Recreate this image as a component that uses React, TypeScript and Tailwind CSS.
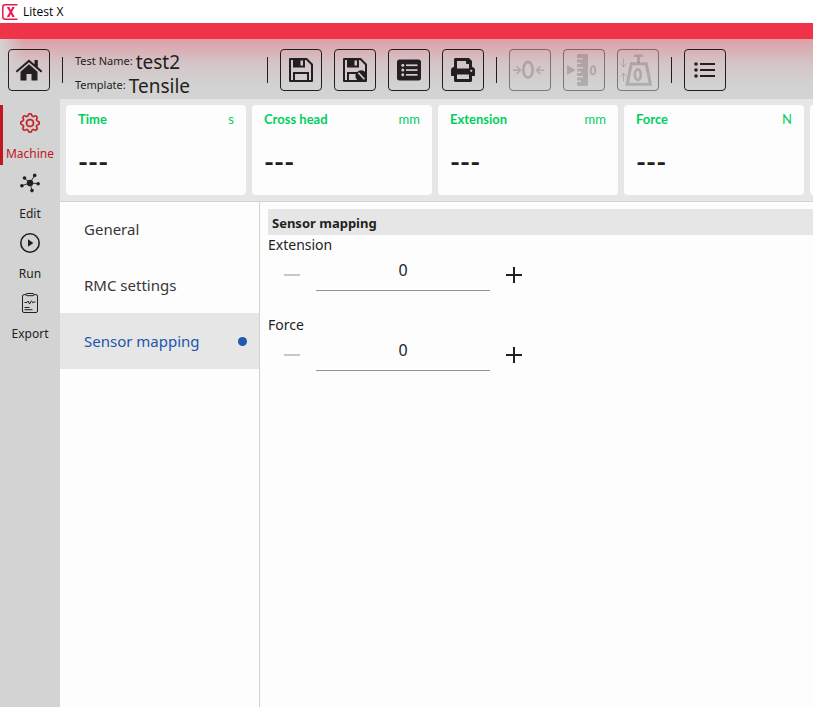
import React, { useState } from "react";
import { FaPrint } from "react-icons/fa";
import { BsGear } from "react-icons/bs";

const ui = "font-['Noto_Sans',sans-serif]";

function Divider() {
  return <div className="h-[26px] w-px shrink-0 bg-[#231f20]" />;
}

function ToolButton({
  label,
  disabled,
  children,
}: {
  label: string;
  disabled?: boolean;
  children: React.ReactNode;
}) {
  return (
    <button
      type="button"
      aria-label={label}
      disabled={disabled}
      className="flex size-[42px] shrink-0 items-center justify-center rounded border border-[#231f20] text-[#231f20] disabled:border-[#231f20]/50 disabled:text-[#231f20]/20"
    >
      {children}
    </button>
  );
}

function HomeIcon() {
  return (
    <svg width="28" height="24" viewBox="0 0 28 24" fill="currentColor">
      <path d="M14 1.500L19.500 6.200V2H22.800V9L27.300 13L26 14.500L14 4.300L2 14.500L0.700 13Z" />
      <path d="M14 6.300L22.500 13.800V22.500H16.500V16H11.500V22.500H5.500V13.800Z" />
    </svg>
  );
}

function SaveShape() {
  return (
    <>
      <path d="M1 1H17.5L23 6.5V23H1Z" fill="none" stroke="currentColor" strokeWidth="2" strokeLinejoin="round" />
      <path fillRule="evenodd" d="M4 1H16V9.5H4ZM11.5 2.5V7.5H14V2.5Z" fill="currentColor" />
      <path d="M5 23V15H19V23" fill="none" stroke="currentColor" strokeWidth="2" />
    </>
  );
}

function SaveIcon() {
  return (
    <svg width="24" height="24" viewBox="0 0 24 24">
      <SaveShape />
    </svg>
  );
}

function SaveAsIcon() {
  return (
    <svg width="24" height="24" viewBox="0 0 24 24">
      <SaveShape />
      <circle cx="18.2" cy="18" r="5.8" fill="currentColor" />
      <path d="M15.4 14.8L21.4 21.2" stroke="#d5cfd0" strokeWidth="1.6" />
    </svg>
  );
}

function ReportIcon() {
  return (
    <svg width="24" height="24" viewBox="0 0 24 24">
      <rect x="0" y="1.5" width="24" height="21" rx="2.5" fill="currentColor" />
      <g fill="#d5c9cb">
        <circle cx="5.8" cy="7.2" r="1.5" />
        <circle cx="5.8" cy="12" r="1.5" />
        <circle cx="5.8" cy="16.8" r="1.5" />
        <rect x="9" y="6.4" width="11.5" height="1.7" />
        <rect x="9" y="11.2" width="11.5" height="1.7" />
        <rect x="9" y="16" width="11.5" height="1.7" />
      </g>
    </svg>
  );
}

function ZeroIcon() {
  return (
    <svg width="40" height="40" viewBox="0 0 40 40" fill="none" stroke="currentColor" strokeWidth="1.4">
      <path d="M3 20.2H10.5M6.5 16.2L10.5 20.2L6.5 24.2M34 20.2H26.5M30.5 16.2L26.5 20.2L30.5 24.2" />
      <ellipse cx="18" cy="19.8" rx="4.7" ry="7.9" strokeWidth="2.6" />
    </svg>
  );
}

function RulerIcon() {
  return (
    <svg width="40" height="40" viewBox="0 0 40 40" fill="currentColor">
      <path d="M3 15V25L11.5 20Z" />
      <path d="M14.500 4H22.500Q24 4 24 5.500V34.500Q24 36 22.500 36H14.500Q13 36 13 34.500V32H17V30.500H13V27.500H19V26H13V23H17V21.500H13V18.500H19V17H13V14H17V12.500H13V9.500H19V8H13V5.500Q13 4 14.500 4Z" />
      <ellipse cx="29" cy="20.200" rx="2.300" ry="4" fill="none" stroke="currentColor" strokeWidth="1.900" />
    </svg>
  );
}

function WeightIcon() {
  return (
    <svg width="40" height="40" viewBox="0 0 40 40" fill="none" stroke="currentColor">
      <path d="M16 4.500H25V7H22V13H19V7H16Z" fill="currentColor" stroke="none" />
      <path d="M13.300 13.700H28.300L32.400 34.300H9.200Z" strokeWidth="3" />
      <ellipse cx="19.800" cy="24.600" rx="3" ry="5.200" strokeWidth="2.700" />
      <path d="M5.500 8.500V16.500M2.500 13.500L5.500 16.800L8.500 13.500M5.500 31.500V23.500M2.500 26.500L5.500 23.200L8.500 26.500" strokeWidth="1" />
    </svg>
  );
}

function ListIcon() {
  return (
    <svg width="22" height="16" viewBox="0 0 22 16" fill="currentColor">
      <circle cx="2" cy="2" r="1.8" />
      <circle cx="2" cy="8" r="1.8" />
      <circle cx="2" cy="14" r="1.8" />
      <rect x="6" y="1" width="15" height="2" />
      <rect x="6" y="7" width="15" height="2" />
      <rect x="6" y="13" width="15" height="2" />
    </svg>
  );
}

function HubIcon() {
  return (
    <svg width="20" height="20" viewBox="0 0 20 20" fill="currentColor" stroke="currentColor">
      <path d="M10 10L4.300 5M10 10L14.700 2.300M10 10L18.300 10.700M10 10L12 17.700M10 10L1.700 12.700" strokeWidth="0.900" />
      <g stroke="none">
        <circle cx="10" cy="10" r="3.200" />
        <circle cx="4.500" cy="5" r="1.800" />
        <circle cx="14.700" cy="2.400" r="1.800" />
        <circle cx="18.100" cy="10.700" r="1.800" />
        <circle cx="12" cy="17.600" r="1.800" />
        <circle cx="1.900" cy="12.700" r="1.800" />
      </g>
    </svg>
  );
}

function RunIcon() {
  return (
    <svg width="20" height="20" viewBox="0 0 20 20">
      <circle cx="10" cy="10" r="9.200" fill="none" stroke="currentColor" strokeWidth="1.600" />
      <path d="M8 6.200V13.800L13.400 10Z" fill="currentColor" />
    </svg>
  );
}

function ExportIcon() {
  return (
    <svg width="20" height="20" viewBox="0 0 20 20" fill="none" stroke="currentColor">
      <rect x="2.500" y="1.600" width="15" height="17.900" rx="1.500" />
      <rect x="6" y="0.500" width="8" height="2.200" rx="1" fill="#d3d3d3" />
      <path d="M4.500 9.500H7L8.200 8L9.500 11L11.500 7.800L12.800 9.800L13.800 9H15.500" />
      <path d="M4.500 14.500H9.500M4.500 16.700H12.500" />
    </svg>
  );
}

function LogoIcon() {
  return (
    <svg width="16" height="16" viewBox="0 0 16 16" fill="none" stroke="#f0144d">
      <path d="M15.500 0.800H3.200Q0.800 0.800 0.800 3.200V12.800Q0.800 15.200 3.200 15.200H15.500" strokeWidth="1.500" />
      <path d="M6.300 3.500L11.300 12.500M11.300 3.500L6.300 12.500" strokeWidth="2" />
      <path d="M5 3.700H7.600M10 3.700H12.600M5 12.300H7.600M10 12.300H12.600" strokeWidth="1" />
    </svg>
  );
}

const steps = [
  { name: "Machine", icon: <BsGear size={20} strokeWidth={0.3} /> },
  { name: "Edit", icon: <HubIcon /> },
  { name: "Run", icon: <RunIcon /> },
  { name: "Export", icon: <ExportIcon /> },
];

const details = [
  { term: "Test Name:", value: "test2" },
  { term: "Template:", value: "Tensile" },
];

const readouts = [
  { name: "Time", unit: "s", value: "---" },
  { name: "Cross head", unit: "mm", value: "---" },
  { name: "Extension", unit: "mm", value: "---" },
  { name: "Force", unit: "N", value: "---" },
  { name: "", unit: "", value: "" },
];

const pages = ["General", "RMC settings", "Sensor mapping"];

function Stepper({ label }: { label: string }) {
  const [value, setValue] = useState(0);
  const id = `mapping-${label.toLowerCase()}`;
  return (
    <div>
      <label htmlFor={id} className="block h-5 text-sm leading-5">
        {label}
      </label>
      <div className="flex">
        <button
          type="button"
          aria-label={`Decrease ${label}`}
          disabled={value === 0}
          onClick={() => setValue(value - 1)}
          className="flex h-10 w-12 items-center justify-center disabled:text-[#c8c8c8]"
        >
          <svg width="16" height="16" viewBox="0 0 16 16">
            <path d="M0 8H16" stroke="currentColor" strokeWidth="2" />
          </svg>
        </button>
        <input
          id={id}
          type="text"
          inputMode="numeric"
          value={value}
          onChange={(e) => setValue(Math.max(0, Number(e.target.value) || 0))}
          className="h-9 w-[174px] border-b border-[#949494] bg-transparent pb-[6px] text-center text-base outline-none"
        />
        <button
          type="button"
          aria-label={`Increase ${label}`}
          onClick={() => setValue(value + 1)}
          className="flex h-10 w-12 items-center justify-center"
        >
          <svg width="16" height="16" viewBox="0 0 16 16">
            <path d="M0 8H16M8 0V16" stroke="currentColor" strokeWidth="2" />
          </svg>
        </button>
      </div>
    </div>
  );
}

export default function App() {
  return (
    <div className={`flex min-h-screen flex-col overflow-hidden bg-[#fdfdfd] text-[#231f20] ${ui}`}>
      <div className="flex h-[23px] items-center gap-[5px] bg-white pl-[2px] font-['Open_Sans',sans-serif] text-xs text-black">
        <LogoIcon />
        <span>Litest X</span>
      </div>
      <div className="h-4 bg-[#ef3348]" />

      <header className="flex h-[60px] items-center gap-3 bg-[linear-gradient(to_right,#d3d3d3,transparent_24px),linear-gradient(to_bottom,#dd9fa6,#d4c4c7_40%,#d3d3d3_80%)] px-2 pt-[2px]">
        <ToolButton label="Home">
          <HomeIcon />
        </ToolButton>
        <Divider />
        <dl className="flex w-[180px] shrink-0 flex-col pt-2">
          {details.map((d) => (
            <div key={d.term} className="flex h-6 items-center gap-[3px]">
              <dt className="pb-[2px] text-[11px] leading-4">{d.term}</dt>
              <dd className="text-[19px] leading-6">{d.value}</dd>
            </div>
          ))}
        </dl>
        <Divider />
        <ToolButton label="Save">
          <SaveIcon />
        </ToolButton>
        <ToolButton label="Save as template">
          <SaveAsIcon />
        </ToolButton>
        <ToolButton label="Report">
          <ReportIcon />
        </ToolButton>
        <ToolButton label="Print">
          <FaPrint size={24} />
        </ToolButton>
        <Divider />
        <ToolButton label="Set zero" disabled>
          <ZeroIcon />
        </ToolButton>
        <ToolButton label="Zero position" disabled>
          <RulerIcon />
        </ToolButton>
        <ToolButton label="Zero force" disabled>
          <WeightIcon />
        </ToolButton>
        <Divider />
        <ToolButton label="Menu">
          <ListIcon />
        </ToolButton>
      </header>

      <div className="flex flex-1">
        <nav className="w-[60px] shrink-0 bg-[#d3d3d3] pt-[6px]">
          {steps.map((step, i) => (
            <button
              key={step.name}
              type="button"
              className={`flex h-[60px] w-full flex-col items-center gap-[13px] pt-2 ${
                i === 0 ? "text-[#c01820] shadow-[inset_3px_0_0_#c01820]" : ""
              }`}
            >
              {step.icon}
              <span className="text-xs leading-4">{step.name}</span>
            </button>
          ))}
        </nav>

        <div className="flex min-w-0 flex-1 flex-col">
          <div className="relative z-10 flex gap-[6px] overflow-hidden bg-[#e6e6e6] p-[6px] shadow-[0_1px_0_#d2d2d2]">
            {readouts.map((r) => (
              <section
                key={r.name}
                className="h-[90px] w-[180px] shrink-0 rounded bg-[#fdfdfd] px-3 pt-[5px] font-['Lato',sans-serif]"
              >
                <div className="flex justify-between text-[13px] leading-[18px] text-[#00cf60]">
                  <span className="font-bold">{r.name}</span>
                  <span>{r.unit}</span>
                </div>
                <div className="pt-[18px] text-[27px] leading-8 font-bold">{r.value}</div>
              </section>
            ))}
          </div>

          <div className="flex flex-1">
            <ul className="w-[200px] shrink-0 border-r border-[#d2d2d2]">
              {pages.map((page, i) => (
                <li key={page}>
                  <a
                    href="#"
                    className={`flex h-14 items-center justify-between pr-3 pl-6 text-[15px] ${
                      i === 2 ? "bg-[#e6e6e6] text-[#1c55ac]" : "text-[#3a3637]"
                    }`}
                  >
                    {page}
                    {i === 2 && <span className="size-[9px] rounded-full bg-[#1f5aad]" />}
                  </a>
                </li>
              ))}
            </ul>
            <main className="min-w-0 flex-1 pt-2 pl-2">
              <h2 className="bg-[#e6e6e6] pt-[2px] pl-1 text-[13px] leading-6 font-bold">Sensor mapping</h2>
              <div className="flex flex-col gap-5">
                <Stepper label="Extension" />
                <Stepper label="Force" />
              </div>
            </main>
          </div>
        </div>
      </div>
    </div>
  );
}
